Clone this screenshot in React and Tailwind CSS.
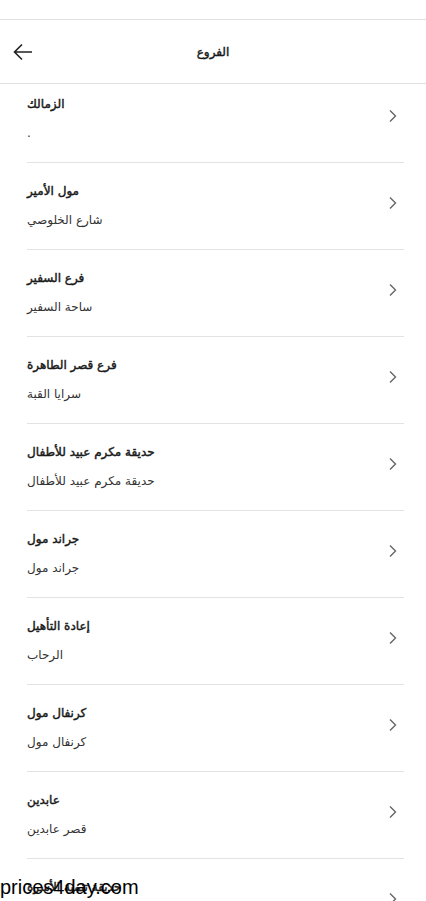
const branches = [
  { name: "الزمالك", address: "." },
  { name: "مول الأمير", address: "شارع الخلوصي" },
  { name: "فرع السفير", address: "ساحة السفير" },
  { name: "فرع قصر الطاهرة", address: "سرايا القبة" },
  { name: "حديقة مكرم عبيد للأطفال", address: "حديقة مكرم عبيد للأطفال" },
  { name: "جراند مول", address: "جراند مول" },
  { name: "إعادة التأهيل", address: "الرحاب" },
  { name: "كرنفال مول", address: "كرنفال مول" },
  { name: "عابدين", address: "قصر عابدين" },
  { name: "حديقة تنمية الأسرة", address: "مدينة نصر" },
];

function ChevronRight() {
  return (
    <svg width="10" height="14" viewBox="0 0 10 14" fill="none">
      <path d="M2 1.5 L7.5 7 L2 12.5" stroke="#666" strokeWidth="1.4" />
    </svg>
  );
}

function BackArrow() {
  return (
    <svg width="20" height="18" viewBox="0 0 20 18" fill="none">
      <path d="M19 9 H2 M9 1.5 L1.5 9 L9 16.5" stroke="#222" strokeWidth="1.6" />
    </svg>
  );
}

function BranchRow({ branch }) {
  return (
    <div className="flex items-center h-[87px] border-b border-[#e3e3e3] ml-[27px] mr-[22px]">
      <div className="flex-1 flex flex-col" dir="ltr">
        <div className="text-[12px] text-[#1a1a1a] leading-[18px] mt-[-2px] text-left [-webkit-text-stroke:0.45px_#1a1a1a]">
          <span dir="rtl">{branch.name}</span>
        </div>
        <div className="text-[12px] text-[#333] leading-[18px] mt-[11px] text-left">
          <span dir="rtl">{branch.address}</span>
        </div>
      </div>
      <div className="w-[20px] flex justify-center mr-[1px] mb-[6px]">
        <ChevronRight />
      </div>
    </div>
  );
}

export default function App() {
  return (
    <div
      className="relative w-[426px] h-[901px] overflow-hidden bg-white"
      style={{ fontFamily: '"DejaVu Sans", "Liberation Sans", sans-serif' }}
    >
      <div className="h-[20px] border-b border-[#e0e0e0]" />
      <div className="relative z-10 h-[64px] flex items-center bg-white border-b border-[#e0e0e0]">
        <div className="w-[60px] pl-[13px] flex items-center">
          <BackArrow />
        </div>
        <div className="flex-1 text-center text-[12px] text-[#1a1a1a] [-webkit-text-stroke:0.45px_#1a1a1a]">
          الفروع
        </div>
        <div className="w-[60px]" />
      </div>
      <div className="overflow-hidden">
        <div className="-mt-[8px]">
          {branches.map((b) => (
            <BranchRow key={b.name} branch={b} />
          ))}
        </div>
      </div>
      <div
        className="absolute left-0 top-[875px] text-[20px] text-black leading-[24px]"
        style={{ fontFamily: '"Liberation Sans", Arial, sans-serif' }}
      >
        prices4day.com
      </div>
    </div>
  );
}
